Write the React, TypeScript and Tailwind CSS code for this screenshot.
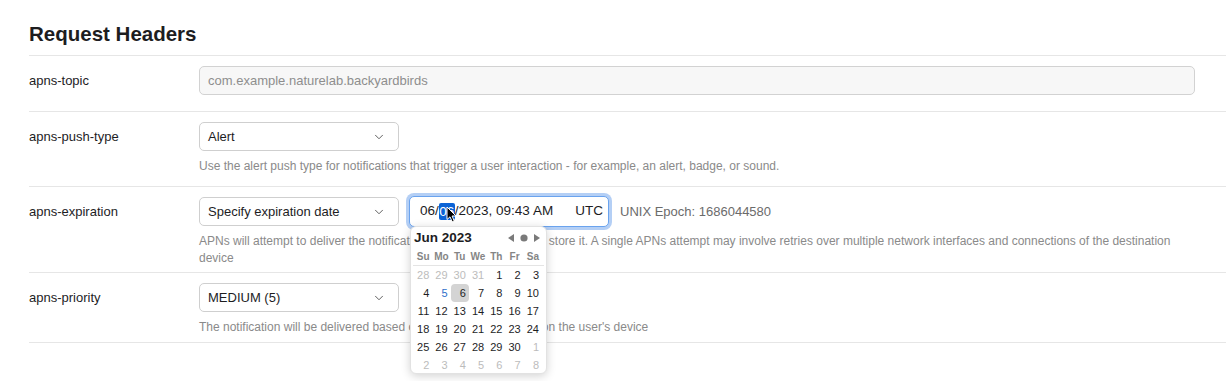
import { ChevronDown } from "lucide-react"

const FONT = { fontFamily: '"Liberation Sans", Arial, sans-serif' }

// calendar grid for June 2023 (Sunday first)
const WEEKS: { d: number; muted?: boolean }[][] = [
    [{ d: 28, muted: true }, { d: 29, muted: true }, { d: 30, muted: true }, { d: 31, muted: true }, { d: 1 }, { d: 2 }, { d: 3 }],
    [{ d: 4 }, { d: 5 }, { d: 6 }, { d: 7 }, { d: 8 }, { d: 9 }, { d: 10 }],
    [{ d: 11 }, { d: 12 }, { d: 13 }, { d: 14 }, { d: 15 }, { d: 16 }, { d: 17 }],
    [{ d: 18 }, { d: 19 }, { d: 20 }, { d: 21 }, { d: 22 }, { d: 23 }, { d: 24 }],
    [{ d: 25 }, { d: 26 }, { d: 27 }, { d: 28 }, { d: 29 }, { d: 30 }, { d: 1, muted: true }],
    [2, 3, 4, 5, 6, 7, 8].map((d) => ({ d, muted: true })),
]

const DAYS = ["Su", "Mo", "Tu", "We", "Th", "Fr", "Sa"]

function Select({ value }: { value: string }) {
    return (
        <div className="flex items-center justify-between w-[200px] h-[29px] border border-[#cfcfcf] rounded-[5px] bg-white pl-[8px] pr-[12px] text-[13px] text-[#1d1d1f]">
            <span>{value}</span>
            <ChevronDown size={14} strokeWidth={1.6} className="text-[#555]" />
        </div>
    )
}

function Row({ label, children, help, pb = "pb-[11px]" }: { label: string; children: React.ReactNode; help?: React.ReactNode; pb?: string }) {
    return (
        <div className={`flex border-t border-[#e6e6e6] pt-[10px] pr-[31px] ${pb}`}>
            <div className="w-[170px] shrink-0 h-[29px] flex items-center text-[13px] text-[#1d1d1f]">{label}</div>
            <div className="flex-1">
                {children}
                {help && <p className="mt-[7px] text-[12px] leading-[17px] text-[#8a8a8a]">{help}</p>}
            </div>
        </div>
    )
}

function Calendar() {
    return (
        <div className="absolute left-[1px] top-full w-[137px] h-[148px] bg-white rounded-[6px] shadow-[0_2px_10px_rgba(0,0,0,0.18)] border border-[#e2e2e2] z-10">
            <div className="flex items-center justify-between pl-[3px] pr-[6px] pt-[2px] h-[20px]">
                <span className="text-[13.5px] font-bold text-[#1d1d1f]">Jun 2023</span>
                <div className="flex items-center gap-[6px] text-[#7a7a7a]">
                    <svg width="6" height="8" viewBox="0 0 6 8"><path d="M6 0 L0 4 L6 8 Z" fill="currentColor" /></svg>
                    <svg width="8" height="8" viewBox="0 0 8 8"><circle cx="4" cy="4" r="3.6" fill="currentColor" /></svg>
                    <svg width="6" height="8" viewBox="0 0 6 8"><path d="M0 0 L6 4 L0 8 Z" fill="currentColor" /></svg>
                </div>
            </div>
            <div className="grid grid-cols-7 pl-[3px] pr-[4px] mt-[1px] h-[16px] items-center">
                {DAYS.map((d) => (
                    <span key={d} className="text-center text-[10px] font-bold text-[#858585]">{d}</span>
                ))}
            </div>
            <div className="mx-[2px] border-t border-[#e4e4e4] mt-[1px]" />
            <div className="pl-[3px] pr-[4px]">
                {WEEKS.map((week, i) => (
                    <div key={i} className="grid grid-cols-7 h-[18px]">
                        {week.map((c, j) => {
                            const selected = i === 1 && j === 2
                            const today = i === 1 && j === 1
                            return (
                                <span
                                    key={j}
                                    className={`flex items-center justify-end pr-[3px] text-[11px] rounded-[4px] ${
                                        selected ? "bg-[#d4d4d4] text-[#1d1d1f]" : today ? "text-[#2f6fca]" : c.muted ? "text-[#bcbcbc]" : "text-[#1d1d1f]"
                                    }`}
                                >
                                    {c.d}
                                </span>
                            )
                        })}
                    </div>
                ))}
            </div>
        </div>
    )
}

export default function App() {
    return (
        <div className="w-[1226px] h-[381px] bg-white pl-[29px] overflow-hidden" style={FONT}>
            <h2 className="pt-[21px] pb-[9px] text-[20.5px] leading-[25px] font-bold text-[#1d1d1f]">Request Headers</h2>

            <Row label="apns-topic" pb="pb-[16px]">
                <div className="h-[29px] flex items-center bg-[#f7f7f7] border border-[#d2d2d2] rounded-[5px] pl-[8px] text-[13px] text-[#8e8e8e]">
                    com.example.naturelab.backyardbirds
                </div>
            </Row>

            <Row
                label="apns-push-type"
                pb="pb-[11px]"
                help="Use the alert push type for notifications that trigger a user interaction - for example, an alert, badge, or sound."
            >
                <Select value="Alert" />
            </Row>

            <Row
                label="apns-expiration"
                pb="pb-[5px]"
                help={
                    <>
                        APNs will attempt to deliver the notification only once and doesn't store it. A single APNs attempt may involve retries over multiple network interfaces and connections of the destination
                        <br />
                        device
                    </>
                }
            >
                <div className="flex items-center">
                    <Select value="Specify expiration date" />
                    <div className="relative ml-[10px]">
                        <div className="flex items-center justify-between w-[200px] h-[31px] -my-[1px] border border-[#6aa3ee] rounded-[5px] ring-[3px] ring-[#b4cff5] bg-white pl-[10px] pr-[5px] text-[13.5px] text-[#1d1d1f]">
                            <span className="flex items-center">
                                06/
                                <span className="bg-[#0b63d6] text-white rounded-[2px] px-[0.5px] leading-[17px]">06</span>
                                /2023, 09:43 AM
                            </span>
                            <span>UTC</span>
                        </div>
                        {/* mouse pointer */}
                        <svg className="absolute left-[37px] top-[9px] z-20" width="11" height="17" viewBox="0 0 11 17">
                            <path d="M1 1 L1 13.5 L4 10.8 L6.2 15.8 L8.2 14.9 L6.1 10 L10 10 Z" fill="#000" stroke="#fff" strokeWidth="1" strokeLinejoin="round" />
                        </svg>
                        <Calendar />
                    </div>
                    <span className="ml-[11px] text-[13px] text-[#6b6b6b]">UNIX Epoch: 1686044580</span>
                </div>
            </Row>

            <Row
                label="apns-priority"
                pb="pb-[6px]"
                help="The notification will be delivered based on power considerations on the user's device"
            >
                <Select value="MEDIUM (5)" />
            </Row>
            <div className="border-t border-[#e6e6e6]" />
        </div>
    )
}
